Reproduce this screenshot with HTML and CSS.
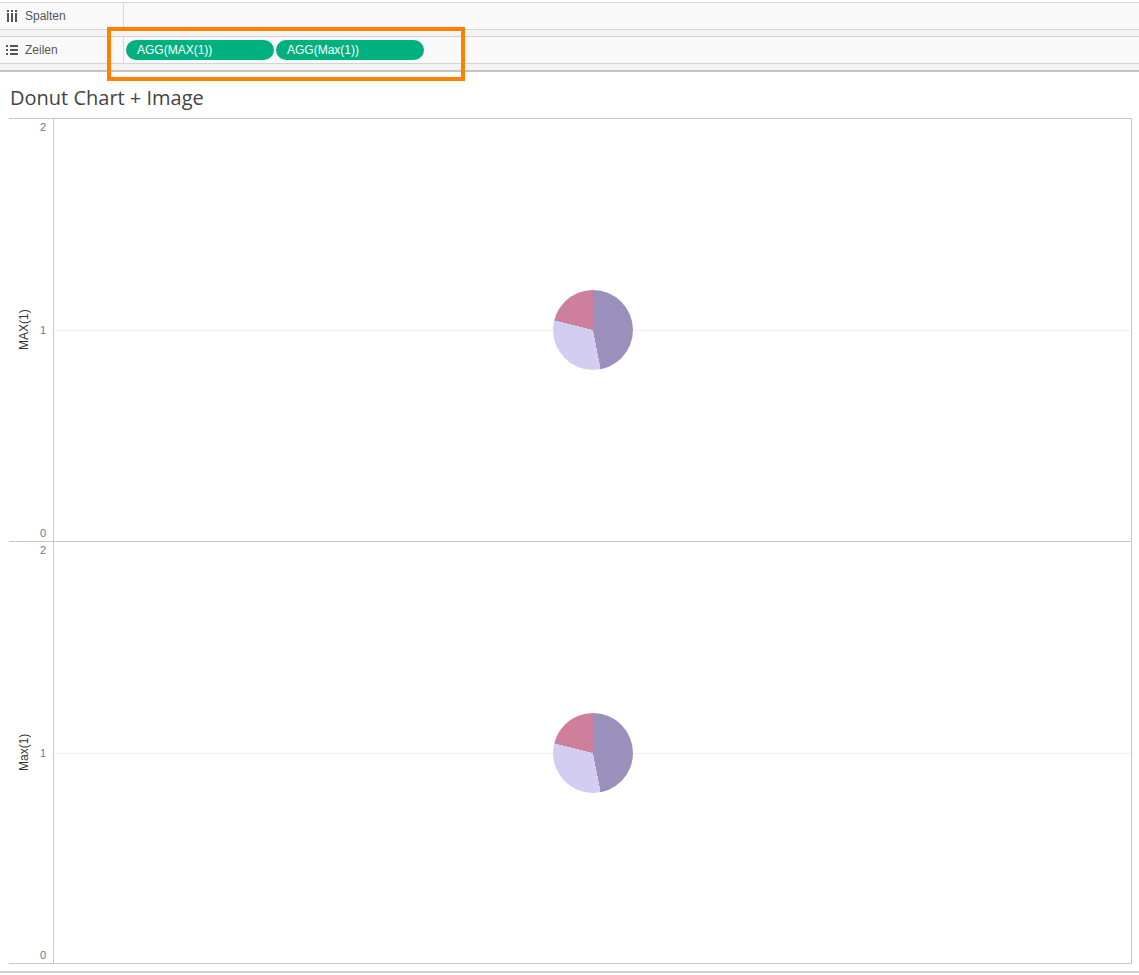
FILE: index.html
```html
<!DOCTYPE html>
<html lang="de">
<head>
  <meta charset="UTF-8">
  <meta name="viewport" content="width=device-width, initial-scale=1.0">
  <title>Donut Chart + Image</title>
  <link rel="stylesheet" href="styles.css">
</head>
<body>
  <div class="shelves">
    <div class="shelf">
      <div class="shelf-label">
        <svg class="shelf-icon" width="12" height="12" viewBox="0 0 12 12">
          <rect x="1" y="0" width="2" height="2" fill="#555"/>
          <rect x="5" y="0" width="2" height="2" fill="#555"/>
          <rect x="9" y="0" width="2" height="2" fill="#555"/>
          <rect x="1" y="3" width="2" height="9" fill="#555"/>
          <rect x="5" y="3" width="2" height="9" fill="#555"/>
          <rect x="9" y="3" width="2" height="9" fill="#555"/>
        </svg>
        <span>Spalten</span>
      </div>
      <div class="shelf-drop"></div>
    </div>
    <div class="shelf-gap"></div>
    <div class="shelf">
      <div class="shelf-label">
        <svg class="shelf-icon" width="12" height="12" viewBox="0 0 12 12">
          <rect x="0" y="1" width="2" height="2" fill="#555"/>
          <rect x="0" y="5" width="2" height="2" fill="#555"/>
          <rect x="0" y="9" width="2" height="2" fill="#555"/>
          <rect x="4" y="1" width="8" height="2" fill="#555"/>
          <rect x="4" y="5" width="8" height="2" fill="#555"/>
          <rect x="4" y="9" width="8" height="2" fill="#555"/>
        </svg>
        <span>Zeilen</span>
      </div>
      <div class="shelf-drop">
        <span class="pill">AGG(MAX(1))</span>
        <span class="pill">AGG(Max(1))</span>
      </div>
    </div>
    <div class="shelf-gap last"></div>
    <div class="highlight"></div>
  </div>

  <h1 class="title">Donut Chart + Image</h1>

  <div class="chart">
    <div class="row">
      <div class="axis">
        <div class="axis-title">MAX(1)</div>
        <div class="ticks">
          <span>2</span>
          <span>1</span>
          <span>0</span>
        </div>
      </div>
      <div class="pane">
        <div class="gridline"></div>
        <div class="pie"></div>
      </div>
    </div>
    <div class="row">
      <div class="axis">
        <div class="axis-title">Max(1)</div>
        <div class="ticks">
          <span>2</span>
          <span>1</span>
          <span>0</span>
        </div>
      </div>
      <div class="pane">
        <div class="gridline"></div>
        <div class="pie"></div>
      </div>
    </div>
  </div>
  <div class="footer-line"></div>
</body>
</html>
```

FILE: styles.css
```css
body {
  margin: 0;
  background-color: #fff;
  font-family: "Liberation Sans", Arial, sans-serif;
  color: #333;
}

.shelves {
  position: relative;
  padding-top: 2px;
  background-color: #fff;
}

.shelf {
  display: grid;
  grid-template-columns: 124px 1fr;
  height: 26px;
  border-top: 1px solid #d4d4d4;
  border-bottom: 1px solid #d4d4d4;
  background-color: #f9f9f9;
}

.shelf-label {
  display: flex;
  align-items: center;
  gap: 7px;
  padding-left: 6px;
  border-right: 1px solid #d9d9d9;
  font-size: 12px;
  color: #555;
}

.shelf-drop {
  display: flex;
  align-items: center;
  gap: 2px;
  padding-left: 2px;
}

.shelf-gap {
  height: 6px;
  background-color: #f3f3f3;
}

.shelf-gap.last {
  border-bottom: 2px solid #c4c4c4;
}

.pill {
  display: flex;
  align-items: center;
  width: 137px;
  height: 20px;
  padding-left: 11px;
  border-radius: 10px;
  background-color: #00b180;
  color: #fff;
  font-size: 12px;
}

.highlight {
  position: absolute;
  left: 107px;
  top: 27px;
  width: 350px;
  height: 46px;
  border: 4px solid #ff7f00;
}

.title {
  margin: 0;
  padding: 12px 10px 0;
  height: 34px;
  font-family: "Open Sans", sans-serif;
  font-size: 20px;
  font-weight: 400;
  color: #444;
}

.chart {
  margin-left: 9px;
  width: 1122px;
  border-top: 1px solid #c8c8c8;
  border-right: 1px solid #c8c8c8;
}

.row {
  display: flex;
  height: 422px;
  border-bottom: 1px solid #c8c8c8;
}

.row + .row {
  height: 421px;
}

.axis {
  display: flex;
  width: 44px;
  border-right: 1px solid #c8c8c8;
}

.axis-title {
  display: flex;
  align-items: center;
  justify-content: center;
  width: 30px;
  writing-mode: vertical-rl;
  transform: rotate(180deg);
  font-size: 12px;
  color: #333;
}

.ticks {
  flex: 1;
  display: flex;
  flex-direction: column;
  justify-content: space-between;
  align-items: flex-end;
  padding: 1px 7px 1px 0;
  font-size: 11px;
  line-height: 14px;
  color: #6a7a8c;
}

.pane {
  position: relative;
  flex: 1;
  display: flex;
  align-items: center;
  justify-content: center;
}

.gridline {
  position: absolute;
  left: 0;
  right: 0;
  top: 50%;
  border-top: 1px solid #f0f0f0;
}

.pie {
  position: relative;
  width: 80px;
  height: 80px;
  border-radius: 50%;
  background: conic-gradient(#9a90bb 0deg 169deg, #d3cdf1 169deg 284deg, #ce7f9b 284deg 360deg);
}

.footer-line {
  margin-top: 7px;
  border-top: 2px solid #d0d0d0;
}
```
